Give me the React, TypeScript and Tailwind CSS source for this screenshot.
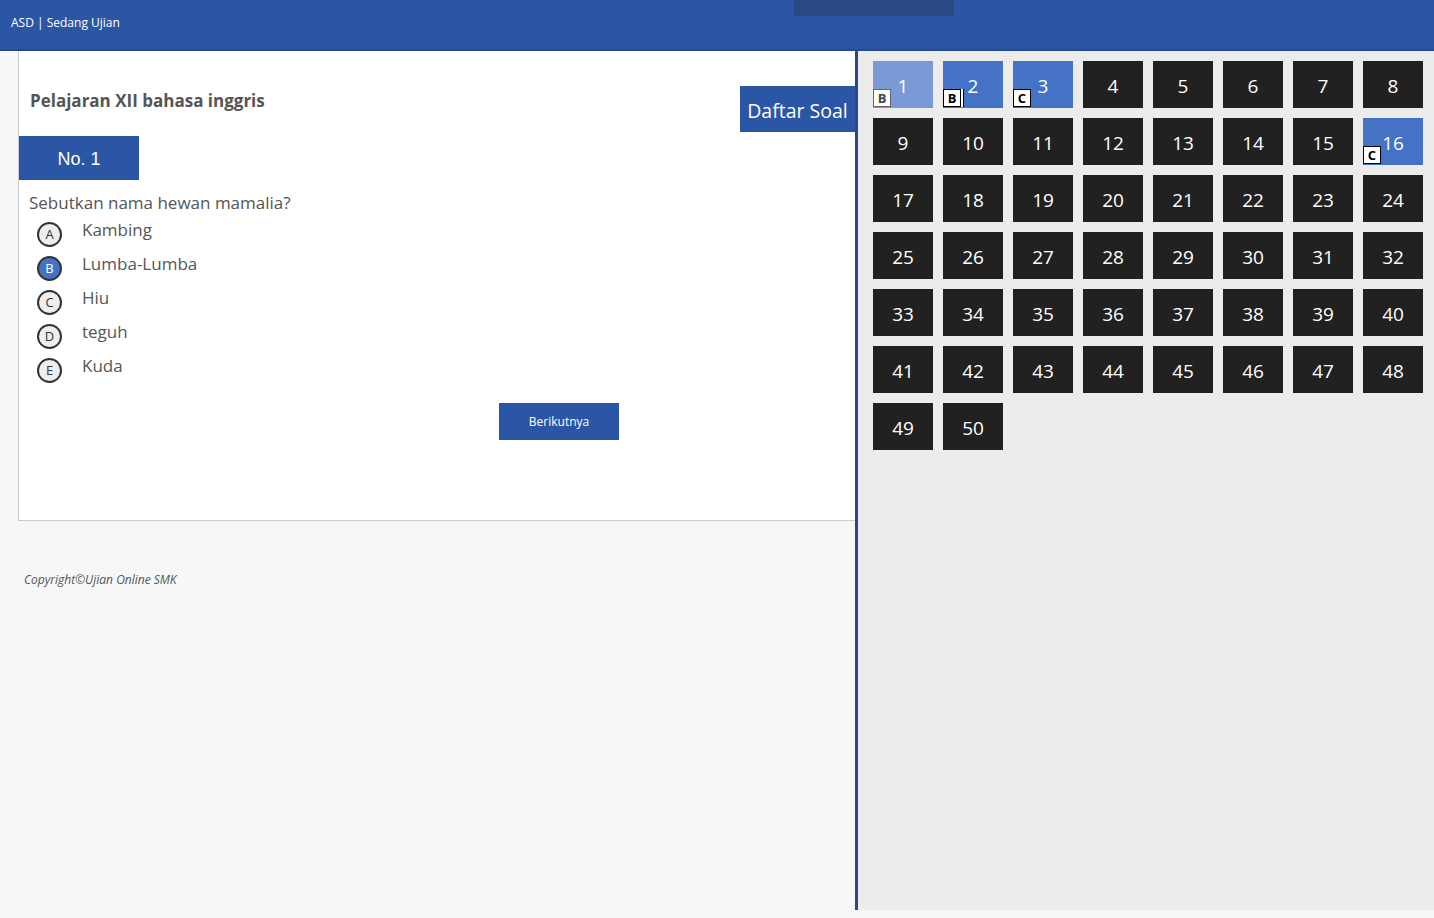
import { useState } from 'react';

const ANSWERS: Record<number, string> = { 1: 'B', 2: 'B', 3: 'C', 16: 'C' };

const OPTIONS = [
  { key: 'A', label: 'Kambing' },
  { key: 'B', label: 'Lumba-Lumba' },
  { key: 'C', label: 'Hiu' },
  { key: 'D', label: 'teguh' },
  { key: 'E', label: 'Kuda' },
];

const FONT = "font-['Open_Sans','Noto_Sans',sans-serif]";

/**
 * Kotak nomor soal di panel kanan
 */
function SoalCell({ no, active }: { no: number; active: boolean }) {
  const answer = ANSWERS[no];
  let bg = 'bg-[#212121]';
  if (active) bg = 'bg-[#7b9ad5]';
  else if (answer) bg = 'bg-[#4472c4]';

  return (
    <div
      className={`relative flex h-[47px] w-[60px] items-center justify-center pt-[3px] text-[19px] text-white ${bg}`}
    >
      {no}
      {answer && (
        <span
          className={`absolute bottom-[1px] left-0 flex h-[18px] w-[18px] items-center justify-center border bg-white text-[13px] font-bold leading-none ${
            active ? 'border-[#666] text-[#444]' : 'border-black text-black'
          } ${no === 2 ? 'shadow-[2px_0_0_0_#fff,3px_0_0_0_#000]' : ''}`}
        >
          {answer}
        </span>
      )}
    </div>
  );
}

export default function App() {
  const [selected, setSelected] = useState<string>('B');

  return (
    <div className={`min-h-[918px] w-[1434px] bg-[#f7f7f7] ${FONT}`}>
      {/* Header */}
      <header className="relative h-[51px] border-b-2 border-[#284a8a] bg-[#2b56a6]">
        <div className="absolute left-[794px] top-0 h-[16px] w-[160px] bg-[#2c4a82]" />
        <div className="pl-[11px] pt-[14px] text-[12px] leading-[18px] text-white">
          ASD | Sedang Ujian
        </div>
      </header>

      <div className="flex">
        {/* Area soal */}
        <div className="w-[855px]">
          <div className="ml-[18px] h-[470px] border-b border-l border-[#cccccc] bg-white">
            <div className="flex items-start justify-between">
              <h2 className="ml-[11px] mt-[40px] text-[17px] font-bold leading-[20px] text-[#555]">
                Pelajaran XII bahasa inggris
              </h2>
              <button
                type="button"
                className="mt-[35px] h-[46px] w-[115px] bg-[#2b56a6] pt-[3px] text-[19.5px] text-white"
              >
                Daftar Soal
              </button>
            </div>

            <div className="mt-[4px] flex h-[44px] w-[120px] items-center justify-center bg-[#2b56a6] pt-[3px] font-['Liberation_Sans',Arial,sans-serif] text-[18px] text-white">
              No. 1
            </div>

            <p className="ml-[10px] mt-[12px] text-[17px] leading-[22px] text-[#555]">
              Sebutkan nama hewan mamalia?
            </p>

            <div className="mt-[3px]">
              {OPTIONS.map((opt) => {
                const isOn = selected === opt.key;
                return (
                  <label
                    key={opt.key}
                    onClick={() => setSelected(opt.key)}
                    className="flex h-[34px] cursor-pointer items-center"
                  >
                    <span
                      className={`ml-[18px] flex h-[25px] w-[25px] items-center justify-center rounded-full border-2 border-[#333] text-[13px] leading-none ${
                        isOn ? 'bg-[#4472c4] text-white' : 'bg-[#eeeeee] text-[#333]'
                      }`}
                    >
                      {opt.key}
                    </span>
                    <span className="ml-[20px] -mt-[8px] text-[17px] text-[#555]">{opt.label}</span>
                  </label>
                );
              })}
            </div>

            <button
              type="button"
              className="ml-[480px] mt-[16px] h-[37px] w-[120px] bg-[#2b56a6] pt-[1px] text-[12px] text-white"
            >
              Berikutnya
            </button>
          </div>

          <p className="pl-[24px] pt-[51px] text-[12px] italic leading-[16px] text-[#555]">
            Copyright©Ujian Online SMK
          </p>
        </div>

        {/* Daftar soal */}
        <aside className="h-[859px] w-[579px] border-l-[3px] border-[#284a8a] bg-[#ececec] pl-[15px] pt-[10px]">
          <div className="grid grid-cols-[repeat(8,60px)] gap-[10px]">
            {Array.from({ length: 50 }, (_, i) => i + 1).map((no) => (
              <SoalCell key={no} no={no} active={no === 1} />
            ))}
          </div>
        </aside>
      </div>
    </div>
  );
}
